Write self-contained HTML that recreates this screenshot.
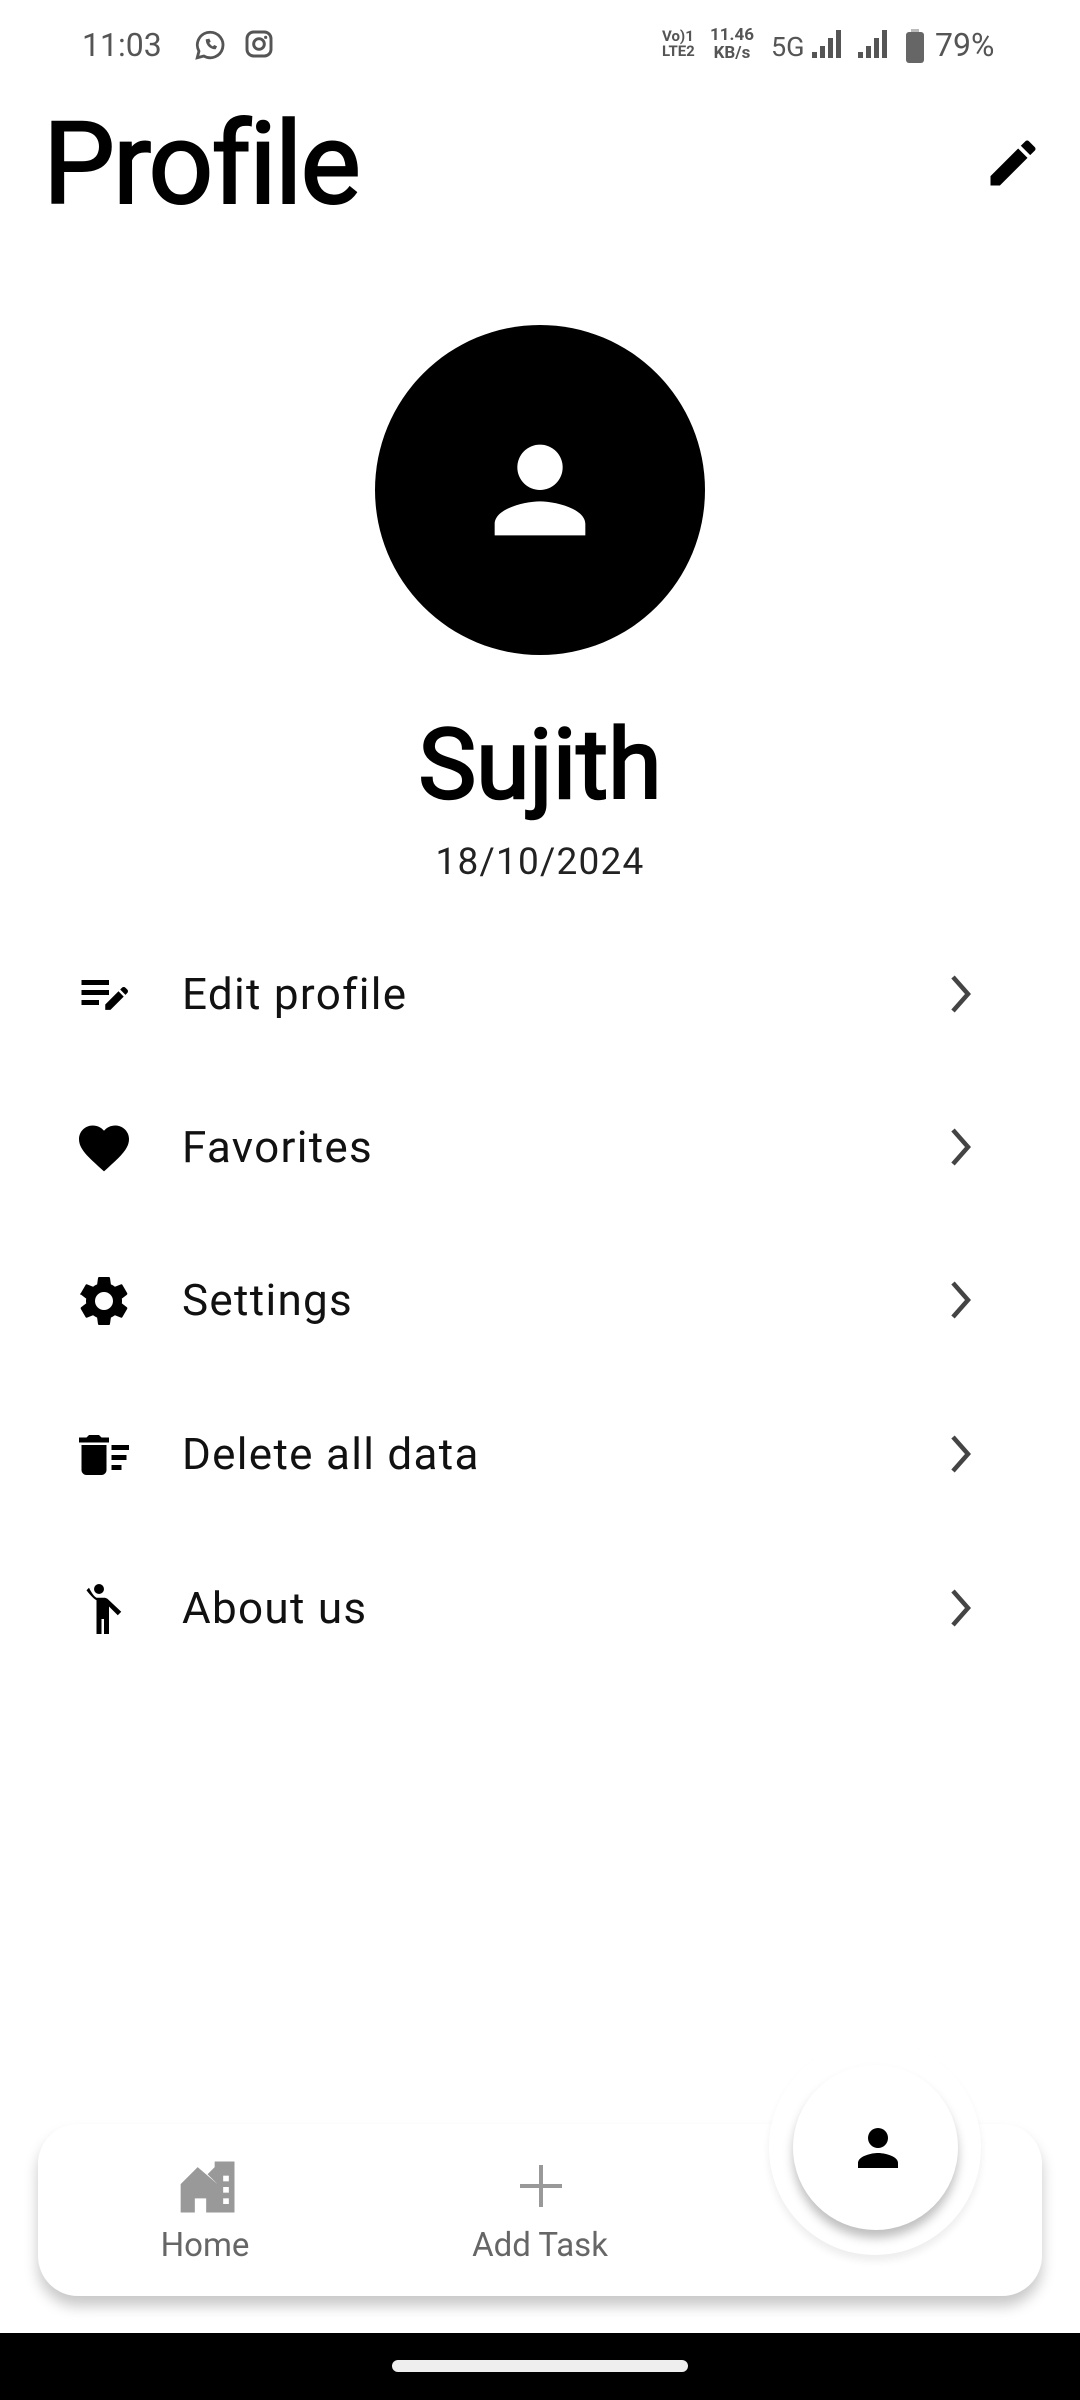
<!DOCTYPE html>
<html><head><meta charset="utf-8"><style>
*{margin:0;padding:0;box-sizing:border-box}
body{width:1080px;height:2400px;background:#fff;position:relative;overflow:hidden;font-family:"Roboto","Liberation Sans",sans-serif;color:#000}
.abs{position:absolute}
.sb{top:26px;font-size:32px;color:#555}
.row{position:absolute;left:0;width:1080px;height:100px}
.row .t{position:absolute;left:182px;top:25px;font-size:44px;letter-spacing:1.3px;color:#111}
.row svg.i{position:absolute;left:74px;top:22px}
.row svg.c{position:absolute;left:946px;top:29px}
</style></head><body>
<div class="abs sb" style="left:82px">11:03</div>
<svg class="abs" style="left:193px;top:28px" width="34" height="34" viewBox="0 0 24 24"><path d="M12 3a9 9 0 0 0-7.8 13.4L3 21l4.7-1.2A9 9 0 1 0 12 3z" fill="none" stroke="#555" stroke-width="2"/><path d="M9 8c0 4 3 7 7 7l1-2-2-1-1 1c-1-.5-2-1.5-2.5-2.5l1-1-1-2z" fill="#555"/></svg>
<svg class="abs" style="left:243px;top:28px" width="32" height="32" viewBox="0 0 24 24"><rect x="3" y="3" width="18" height="18" rx="5" fill="none" stroke="#555" stroke-width="2.2"/><circle cx="12" cy="12" r="4" fill="none" stroke="#555" stroke-width="2.2"/><circle cx="17" cy="7" r="1.2" fill="#555"/></svg>
<div class="abs" style="left:662px;top:29px;font-size:15px;line-height:15px;color:#555;font-weight:bold">Vo)1<br>LTE2</div>
<div class="abs" style="left:710px;top:26px;font-size:17px;line-height:18px;color:#555;text-align:center;font-weight:bold">11.46<br>KB/s</div>
<div class="abs sb" style="left:771px;top:31px;font-size:27px">5G</div>
<svg class="abs" style="left:812px;top:30px" width="32" height="30"><rect x="0" y="22" width="5" height="6" fill="#555"/><rect x="8" y="16" width="5" height="12" fill="#555"/><rect x="16" y="8" width="5" height="20" fill="#555"/><rect x="24" y="0" width="5" height="28" fill="#555"/></svg>
<svg class="abs" style="left:858px;top:30px" width="32" height="30"><rect x="0" y="22" width="5" height="6" fill="#555"/><rect x="8" y="16" width="5" height="12" fill="#555"/><rect x="16" y="8" width="5" height="20" fill="#555"/><rect x="24" y="0" width="5" height="28" fill="#555"/></svg>
<svg class="abs" style="left:906px;top:29px" width="18" height="34"><rect x="5" y="0" width="8" height="4" fill="#bbb"/><rect x="0" y="3" width="18" height="31" rx="3" fill="#666"/></svg>
<div class="abs sb" style="left:935px">79%</div>

<div class="abs" style="left:43px;top:97px;font-size:114px;letter-spacing:-2px;-webkit-text-stroke:2px #000">Profile</div>
<svg class="abs" style="left:983px;top:133px" width="60" height="60" viewBox="0 0 24 24"><path d="M3 17.25V21h3.75L17.81 9.94l-3.75-3.75L3 17.25zM20.71 7.04a1 1 0 0 0 0-1.41l-2.34-2.34a1 1 0 0 0-1.41 0l-1.83 1.83 3.75 3.75 1.83-1.83z"/></svg>

<div class="abs" style="left:375px;top:325px;width:330px;height:330px;border-radius:50%;background:#000"></div>
<svg class="abs" style="left:472px;top:422px" width="136" height="136" viewBox="0 0 24 24"><path fill="#fff" d="M12 12a4 4 0 1 0 0-8 4 4 0 0 0 0 8zm0 2c-2.7 0-8 1.3-8 4v2h16v-2c0-2.7-5.3-4-8-4z"/></svg>

<div class="abs" style="left:0;width:1080px;top:708px;text-align:center;font-size:97px;-webkit-text-stroke:2.5px #000">Sujith</div>
<div class="abs" style="left:0;width:1080px;top:841px;text-align:center;font-size:37px;color:#222;letter-spacing:1.2px">18/10/2024</div>

<div class="row" style="top:943px"><svg class="i" width="60" height="60" viewBox="0 0 24 24"><path d="M3 10h11v2H3zm0-4h11v2H3zm0 8h7v2H3zm17.59-2.07l.71-.71a1 1 0 0 0 0-1.41l-.71-.71a1 1 0 0 0-1.41 0l-.71.71 2.12 2.12zm-.71.71l-5.3 5.3H12.5v-2.12l5.3-5.3 2.08 2.12z"/></svg><div class="t">Edit profile</div><svg class="c" width="30" height="44" viewBox="0 0 30 44"><path d="M7 5l15 17L7 39" fill="none" stroke="#444" stroke-width="4.5"/></svg></div>
<div class="row" style="top:1096px"><svg class="i" width="60" height="60" viewBox="0 0 24 24"><path d="M12 21.35l-1.45-1.32C5.4 15.36 2 12.28 2 8.5 2 5.42 4.42 3 7.5 3c1.74 0 3.41.81 4.5 2.09C13.09 3.81 14.76 3 16.5 3 19.58 3 22 5.420 22 8.5c0 3.78-3.4 6.86-8.55 11.54L12 21.35z"/></svg><div class="t">Favorites</div><svg class="c" width="30" height="44" viewBox="0 0 30 44"><path d="M7 5l15 17L7 39" fill="none" stroke="#444" stroke-width="4.5"/></svg></div>
<div class="row" style="top:1249px"><svg class="i" width="60" height="60" viewBox="0 0 24 24"><path d="M19.14 12.94c.04-.3.06-.61.06-.94 0-.32-.02-.64-.07-.94l2.03-1.58a.49.49 0 0 0 .12-.61l-1.92-3.32a.49.49 0 0 0-.59-.22l-2.39.96c-.5-.38-1.03-.7-1.62-.94l-.36-2.54a.48.48 0 0 0-.48-.41h-3.84c-.24 0-.43.17-.47.41l-.36 2.54c-.59.24-1.130.57-1.62.94l-2.39-.96a.48.48 0 0 0-.59.22L2.74 8.87c-.12.21-.8.47.12.61l2.03 1.58c-.05.3-.09.63-.09.94s.02.64.07.94l-2.03 1.58a.49.49 0 0 0-.12.61l1.92 3.32c.12.22.37.29.59.22l2.39-.96c.5.38 1.03.7 1.62.94l.36 2.54c.05.24.24.41.48.41h3.84c.24 0 .44-.17.47-.41l.36-2.54c.59-.24 1.13-.56 1.62-.94l2.39.96c.22.08.47 0 .59-.22l1.92-3.32a.48.48 0 0 0-.12-.61l-2.01-1.58zM12 15.6A3.6 3.6 0 1 1 12 8.4a3.6 3.6 0 0 1 0 7.2z"/></svg><div class="t">Settings</div><svg class="c" width="30" height="44" viewBox="0 0 30 44"><path d="M7 5l15 17L7 39" fill="none" stroke="#444" stroke-width="4.5"/></svg></div>
<div class="row" style="top:1403px"><svg class="i" width="60" height="60" viewBox="0 0 24 24"><path d="M15 16h4v2h-4zm0-8h7v2h-7zm0 4h6v2h-6zM3 18c0 1.1.9 2 2 2h6c1.1 0 2-.9 2-2V8H3v10zM14 5h-3l-1-1H6L5 5H2v2h12z"/></svg><div class="t">Delete all data</div><svg class="c" width="30" height="44" viewBox="0 0 30 44"><path d="M7 5l15 17L7 39" fill="none" stroke="#444" stroke-width="4.5"/></svg></div>
<div class="row" style="top:1557px"><svg class="i" width="60" height="60" viewBox="0 0 24 24"><circle cx="10" cy="4" r="2"/><path d="M6 3.5L5 4.5c1.5 2 3 3.5 4 4V22h2v-6h1v6h2V11l3.5 3.5 1.4-1.4L14 8.5c-.5-.5-1-1-2-1h-3C8 7 7 5.5 6 3.5z"/></svg><div class="t">About us</div><svg class="c" width="30" height="44" viewBox="0 0 30 44"><path d="M7 5l15 17L7 39" fill="none" stroke="#444" stroke-width="4.5"/></svg></div>

<div class="abs" style="left:38px;top:2124px;width:1004px;height:172px;border-radius:40px;background:#fff;box-shadow:0 10px 14px rgba(0,0,0,.22)"></div>
<div class="abs" style="left:769px;top:2040px;width:212px;height:215px;border-radius:50%;background:#fff;box-shadow:0 6px 8px rgba(0,0,0,.07)"></div>
<svg class="abs" style="left:175px;top:2155px" width="68" height="64" viewBox="0 0 24 22"><path fill="#999" d="M14 2h7v18h-6V10L11.5 6.5 14 4zM8 4l7 6v10h-4v-5H7v5H2V10z"/><rect x="17" y="7" width="2" height="2" fill="#fff"/><rect x="17" y="11" width="2" height="2" fill="#fff"/><rect x="17" y="15" width="2" height="2" fill="#fff"/></svg>
<div class="abs" style="left:110px;width:190px;top:2226px;text-align:center;font-size:33px;color:#666">Home</div>
<svg class="abs" style="left:520px;top:2165px" width="42" height="42"><rect x="19" y="0" width="4" height="42" fill="#999"/><rect x="0" y="19" width="42" height="4" fill="#999"/></svg>
<div class="abs" style="left:440px;width:200px;top:2226px;text-align:center;font-size:33px;color:#666">Add Task</div>
<div class="abs" style="left:793px;top:2065px;width:165px;height:165px;border-radius:50%;background:#fff;box-shadow:0 8px 10px rgba(0,0,0,.25)"></div>
<svg class="abs" style="left:848px;top:2118px" width="60" height="60" viewBox="0 0 24 24"><path d="M12 12a4 4 0 1 0 0-8 4 4 0 0 0 0 8zm0 2c-2.7 0-8 1.3-8 4v2h16v-2c0-2.7-5.3-4-8-4z"/></svg>

<div class="abs" style="left:0;top:2333px;width:1080px;height:67px;background:#000"></div>
<div class="abs" style="left:392px;top:2360px;width:296px;height:12px;border-radius:6px;background:#eee"></div>
</body></html>
